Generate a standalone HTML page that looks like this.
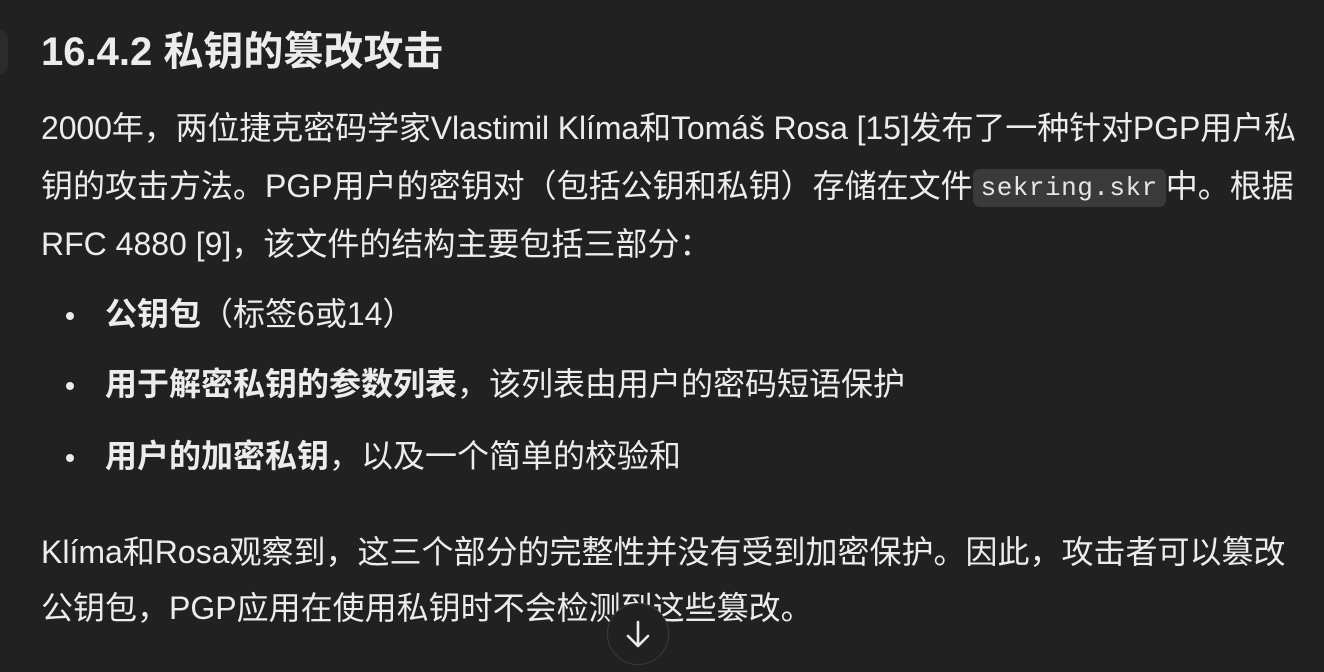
<!DOCTYPE html>
<html><head><meta charset="utf-8"><style>
html,body{margin:0;padding:0;background:#212121;width:1324px;height:672px;overflow:hidden}
body{font-family:"Liberation Sans","Noto Sans CJK SC",sans-serif;color:#ececec;position:relative}
.l{position:absolute;left:41px;white-space:nowrap;font-size:32px;line-height:40px}
h2{position:absolute;left:41px;top:29px;margin:0;font-size:40px;line-height:46px;font-weight:700;white-space:nowrap}
code{font-family:"Liberation Mono",monospace;font-size:26px;background:#3a3a3a;border-radius:7px;padding:4px 8px;color:#e6e6e6;position:relative;top:-2px;letter-spacing:0.5px}
b{font-weight:700}
.dot{position:absolute;left:66px;width:8px;height:8px;border-radius:50%;background:#ececec}
.btn{position:absolute;left:607px;top:603px;width:62px;height:62px;border-radius:50%;background:#212121;border:1px solid #3d3d3d;box-sizing:border-box}
.lc{position:absolute;left:0;top:30px;width:8px;height:44px;border-radius:0 20px 20px 0;background:#2b2b2b}
</style></head><body>
<div class="lc"></div>
<h2>16.4.2 私钥的篡改攻击</h2>
<div class="l" style="top:108px;letter-spacing:-0.1px">2000年，两位捷克密码学家Vlastimil Klíma和Tomáš Rosa [15]发布了一种针对PGP用户私</div>
<div class="l" style="top:166px">钥的攻击方法。PGP用户的密钥对（包括公钥和私钥）存储在文件<code>sekring.skr</code>中。根据</div>
<div class="l" style="top:224px">RFC 4880 [9]，该文件的结构主要包括三部分：</div>
<div class="dot" style="top:312px"></div>
<div class="l" style="top:294px;left:105px"><b>公钥包</b>（标签6或14）</div>
<div class="dot" style="top:382px"></div>
<div class="l" style="top:364px;left:105px"><b>用于解密私钥的参数列表</b>，该列表由用户的密码短语保护</div>
<div class="dot" style="top:454px"></div>
<div class="l" style="top:436px;left:105px"><b>用户的加密私钥</b>，以及一个简单的校验和</div>
<div class="l" style="top:532px">Klíma和Rosa观察到，这三个部分的完整性并没有受到加密保护。因此，攻击者可以篡改</div>
<div class="l" style="top:588px">公钥包，PGP应用在使用私钥时不会检测到这些篡改。</div>
<div class="btn"><svg width="60" height="60" viewBox="0 0 60 60" style="position:absolute;left:0;top:0"><path d="M30 18V42M20 32L30 42L40 32" stroke="#ececec" stroke-width="2.6" fill="none" stroke-linecap="round" stroke-linejoin="round"/></svg></div>
</body></html>
